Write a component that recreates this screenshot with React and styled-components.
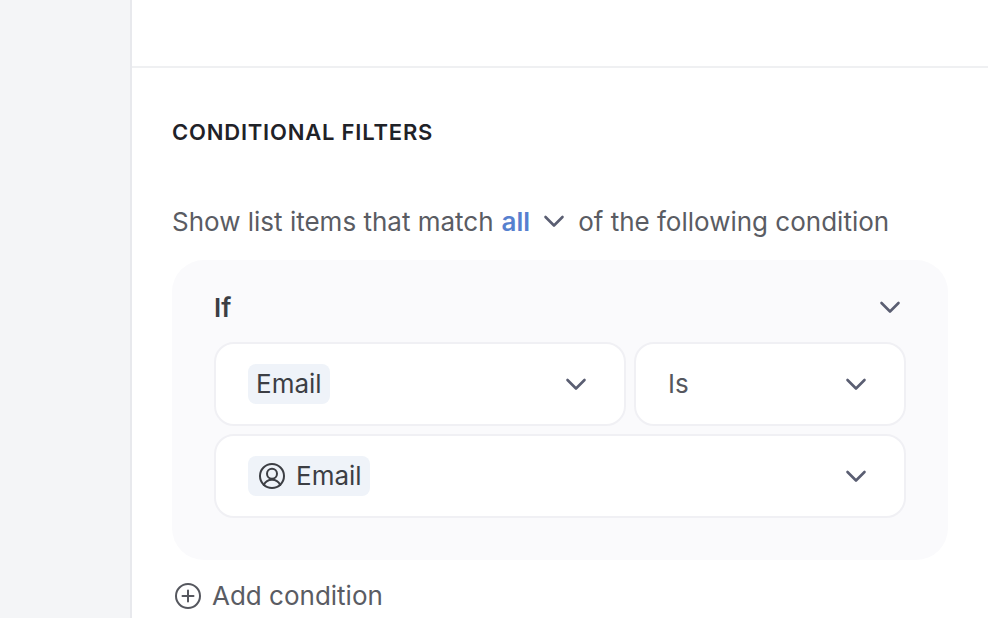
import React from 'react'
import styled, { createGlobalStyle } from 'styled-components'

const GlobalStyle = createGlobalStyle`
  html, body {
    margin: 0;
    padding: 0;
    height: 618px;
    overflow: hidden;
    background: #fff;
    font-family: Inter, "Liberation Sans", sans-serif;
  }
`

const Page = styled.div`
  display: flex;
  height: 618px;
  overflow: hidden;
`

const Sidebar = styled.aside`
  width: 130px;
  flex: none;
  background: #f4f5f7;
  border-right: 2px solid #e8e9ed;
`

const Main = styled.main`
  flex: 1;
  min-width: 0;
`

const TopBar = styled.div`
  height: 66px;
  border-bottom: 2px solid #eff0f2;
`

const Section = styled.section`
  padding: 50px 40px 0;
`

const Title = styled.h2`
  margin: 0 0 55px;
  font-size: 22px;
  line-height: 28px;
  font-weight: 600;
  letter-spacing: 0.8px;
  color: #1f2228;
`

const Sentence = styled.div`
  display: flex;
  align-items: center;
  height: 40px;
  margin-bottom: 19px;
  font-size: 26px;
  color: #5a5c63;
  white-space: nowrap;
`

const MatchWord = styled.span`
  margin-left: 8px;
  font-weight: 600;
  color: #5680cf;
`

const SentenceChevron = styled.span`
  display: flex;
  margin: 0 12px;
`

const Card = styled.div`
  background: #fafafc;
  border-radius: 32px;
  padding: 25px 42px 42px;
`

const CardHead = styled.div`
  display: flex;
  align-items: center;
  justify-content: space-between;
  height: 44px;
  margin-bottom: 13px;
  padding-right: 4px;
`

const IfLabel = styled.span`
  font-size: 26px;
  font-weight: 600;
  color: #3c3e44;
`

const Rows = styled.div`
  display: flex;
  flex-direction: column;
  gap: 8px;
`

const Row = styled.div`
  display: grid;
  grid-template-columns: ${p => p.$columns || '1fr'};
  gap: 8px;
`

const Select = styled.div`
  box-sizing: border-box;
  height: 84px;
  display: flex;
  align-items: center;
  justify-content: space-between;
  padding: 0 36px 0 32px;
  background: #fff;
  border: 2px solid #f0f0f4;
  border-radius: 20px;
  font-size: 26px;
  color: #42444a;
`

const Chip = styled.span`
  display: inline-flex;
  align-items: center;
  gap: 10px;
  height: 40px;
  padding: 0 8px 0 ${p => (p.$withIcon ? '10px' : '8px')};
  background: #eff3f9;
  border-radius: 8px;
  color: #3c3e44;
`

const Label = styled.span`
  display: block;
  margin-bottom: 2px;
`

const PlainValue = styled(Label)`
  color: #55575e;
`

const AddRow = styled.div`
  display: flex;
  align-items: center;
  gap: 10px;
  height: 40px;
  margin-top: 16px;
  padding-left: 2px;
  font-size: 26px;
  color: #5a5c63;
`

const Chevron = () => (
  <svg width="24" height="24" viewBox="0 0 24 24" fill="none" stroke="#5a5e72" strokeWidth="2.6" strokeLinecap="round" strokeLinejoin="round">
    <path d="M3.5 8 12 16.5 20.5 8" />
  </svg>
)

const UserCircle = () => (
  <svg width="28" height="28" viewBox="0 0 28 28" fill="none" stroke="#3c3e44" strokeWidth="2" strokeLinecap="round">
    <circle cx="14" cy="14" r="12" />
    <circle cx="14" cy="11.800" r="5" />
    <path d="M5.800 23c1.600-3.400 4.500-5.200 8.200-5.200s6.600 1.800 8.200 5.200" />
  </svg>
)

const PlusCircle = () => (
  <svg width="28" height="28" viewBox="0 0 28 28" fill="none" stroke="#55575e" strokeWidth="2" strokeLinecap="round">
    <circle cx="14" cy="14" r="12" />
    <path d="M14 8.500v11M8.500 14h11" />
  </svg>
)

export default function App() {
  return (
    <>
      <GlobalStyle />
      <Page>
        <Sidebar />
        <Main>
          <TopBar />
          <Section>
            <Title>CONDITIONAL FILTERS</Title>
            <Sentence>
              Show list items that match
              <MatchWord>all</MatchWord>
              <SentenceChevron><Chevron /></SentenceChevron>
              of the following condition
            </Sentence>
            <Card>
              <CardHead>
                <IfLabel>If</IfLabel>
                <Chevron />
              </CardHead>
              <Rows>
                <Row $columns="412px 1fr">
                  <Select>
                    <Chip><Label>Email</Label></Chip>
                    <Chevron />
                  </Select>
                  <Select>
                    <PlainValue>Is</PlainValue>
                    <Chevron />
                  </Select>
                </Row>
                <Row>
                  <Select>
                    <Chip $withIcon><UserCircle /><Label>Email</Label></Chip>
                    <Chevron />
                  </Select>
                </Row>
              </Rows>
            </Card>
            <AddRow>
              <PlusCircle />
              <Label>Add condition</Label>
            </AddRow>
          </Section>
        </Main>
      </Page>
    </>
  )
}
